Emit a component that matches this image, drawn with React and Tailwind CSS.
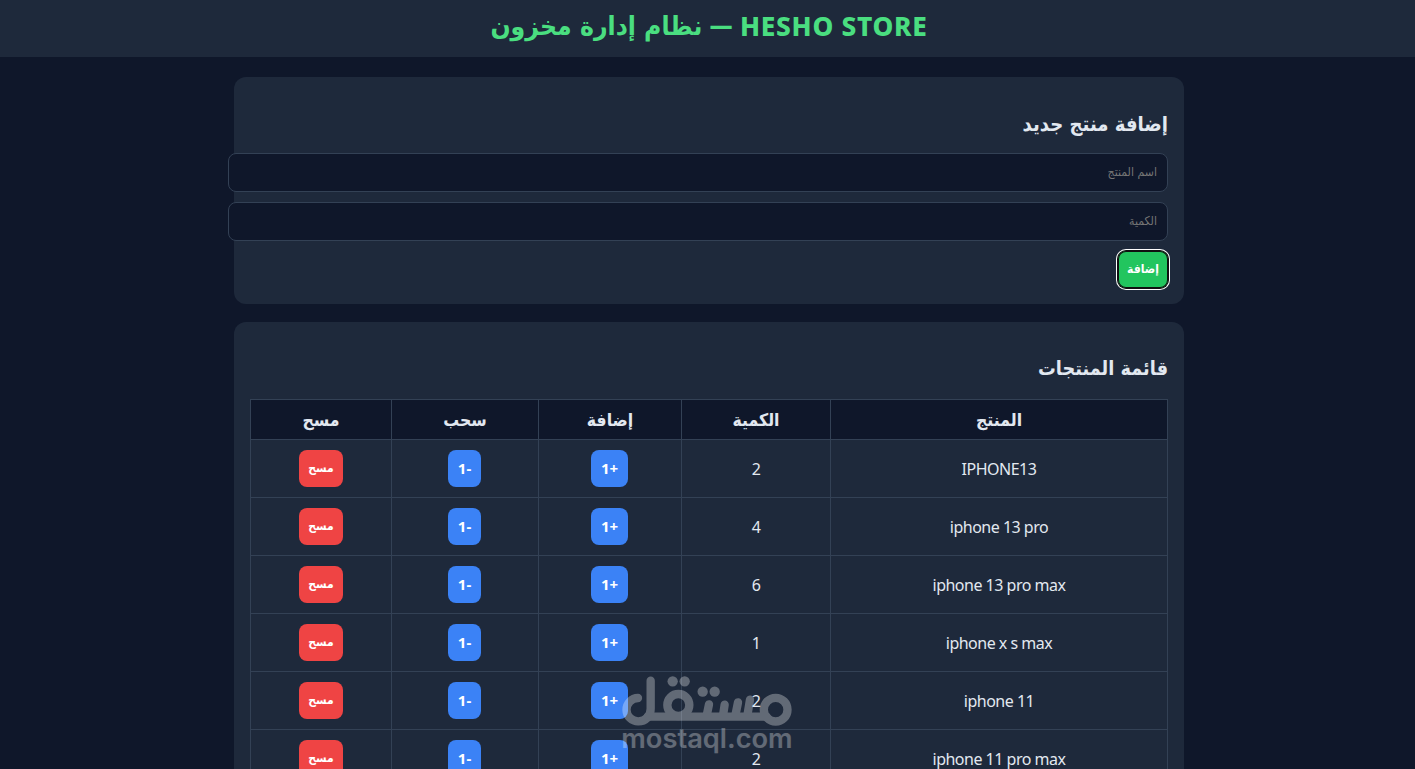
import React from "react";

const products = [
  { name: "IPHONE13", qty: 2 },
  { name: "iphone 13 pro", qty: 4 },
  { name: "iphone 13 pro max", qty: 6 },
  { name: "iphone x s max", qty: 1 },
  { name: "iphone 11", qty: 2 },
  { name: "iphone 11 pro max", qty: 2 },
];

const cell = "border border-[#334155] p-0 text-center";
const latinCell = "border border-[#334155] p-0 text-center font-['Noto_Sans',sans-serif] tracking-[-0.5px]";
const button = "inline-flex h-[37px] items-center justify-center rounded-lg font-bold text-white";
const arabicLabel = "pb-px text-[12px]";
const numberLabel = "text-[15px] font-['Noto_Sans',sans-serif]";

function Watermark() {
  return (
    <div className="pointer-events-none absolute left-[621px] top-[675px] text-white opacity-30" dir="ltr">
      <svg width="172" height="80" viewBox="123 45 516 240" fill="none" stroke="currentColor" strokeWidth="25" strokeLinecap="round" strokeLinejoin="round">
        <path d="M174 114A35 35 0 1 0 175 184C197 184 212 168 212 146V62" />
        <path d="M203 170H560" />
        <circle cx="295" cy="135" r="33" />
        <path d="M387 133L380 167M434 134L429 167M474 127L466 167M510 119L502 167" />
        <circle cx="587" cy="149" r="35.5" />
        <g fill="currentColor" stroke="none">
          <circle cx="278" cy="64" r="15.5" />
          <circle cx="314" cy="64" r="15.5" />
          <circle cx="368" cy="95" r="15.5" />
          <circle cx="404" cy="95" r="15.5" />
          <text x="124" y="263" fontSize="80" fontWeight="600" textLength="514" lengthAdjust="spacingAndGlyphs" fontFamily="Inter, Liberation Sans, sans-serif">
            mostaql.com
          </text>
        </g>
      </svg>
    </div>
  );
}

function Field({ placeholder }) {
  return (
    <input
      placeholder={placeholder}
      className="block h-[39px] w-[940px] shrink-0 rounded-lg border border-[#334155] bg-[#0f172a] px-2.5 pb-0.5 text-[12.2px] text-white placeholder:text-[#757575] focus:outline-none"
    />
  );
}

export default function App() {
  return (
    <div
      dir="rtl"
      className="relative h-[769px] overflow-hidden bg-[#0f172a] text-base text-[#e2e8f0] font-['DejaVu_Sans_Condensed','DejaVu_Sans',sans-serif]"
    >
      <header className="flex h-[57px] justify-center bg-[#1e293b] pl-[3px]">
        <h1 className="flex h-[53px] items-center gap-[7px] whitespace-nowrap text-[26.3px] font-bold text-[#4ade80]">
          <span className="font-extrabold tracking-[0.7px] font-['Noto_Sans',sans-serif]">HESHO STORE</span>
          <span>—</span>
          <span>نظام إدارة مخزون</span>
        </h1>
      </header>
      <main className="flex flex-col items-center gap-[18px] pl-[3px] pt-5">
        <section className="h-[227px] w-[950px] rounded-xl bg-[#1e293b] px-4 pt-8">
          <h2 className="flex h-[30px] items-center text-[20.1px] font-bold">إضافة منتج جديد</h2>
          <div className="mt-3.5 flex flex-col items-start gap-2.5">
            <Field placeholder="اسم المنتج" />
            <Field placeholder="الكمية" />
            <button className={`${button} ${arabicLabel} w-[50px] bg-[#22c55e] shadow-[inset_0_0_0_1px_#101010,0_0_0_1px_#101010,0_0_0_2px_#ffffff]`}>
              إضافة
            </button>
          </div>
        </section>
        <section className="w-[950px] rounded-t-xl bg-[#1e293b] px-4 pt-8">
          <h2 className="flex h-[30px] items-center text-[19.7px] font-bold">قائمة المنتجات</h2>
          <table className="mt-[15px] w-[918px] table-fixed border-collapse">
            <colgroup>
              <col className="w-[337px]" />
              <col className="w-[149px]" />
              <col className="w-[143px]" />
              <col className="w-[147px]" />
              <col className="w-[141px]" />
            </colgroup>
            <thead>
              <tr className="h-10 bg-[#0f172a]">
                {["المنتج", "الكمية", "إضافة", "سحب", "مسح"].map((label) => (
                  <th key={label} className={`${cell} text-[17.5px] leading-6 font-bold`}>{label}</th>
                ))}
              </tr>
            </thead>
            <tbody>
              {products.map((p) => (
                <tr key={p.name} className="h-[58px]">
                  <td className={latinCell}>{p.name}</td>
                  <td className={latinCell}>{p.qty}</td>
                  <td className={cell}>
                    <button className={`${button} ${numberLabel} mr-px w-[37px] bg-[#3b82f6] align-middle`}>+1</button>
                  </td>
                  <td className={cell}>
                    <button className={`${button} ${numberLabel} mr-px w-[33px] bg-[#3b82f6] align-middle`}>-1</button>
                  </td>
                  <td className={cell}>
                    <button className={`${button} ${arabicLabel} w-[44px] bg-[#ef4444] align-middle`}>مسح</button>
                  </td>
                </tr>
              ))}
            </tbody>
          </table>
        </section>
      </main>
      <Watermark />
    </div>
  );
}
